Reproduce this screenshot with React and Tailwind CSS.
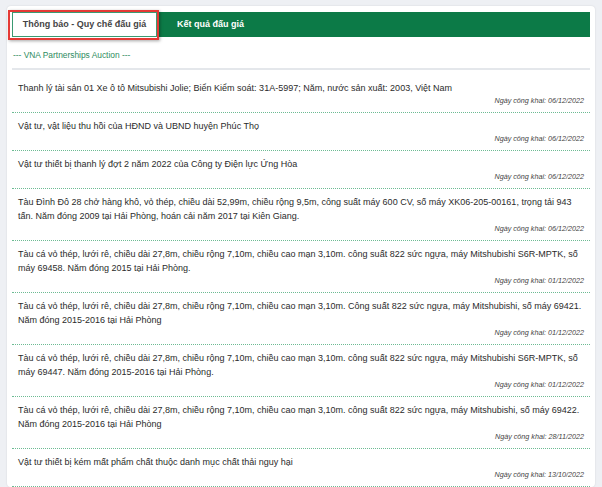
const items = [
  {
    title: 'Thanh lý tài sản 01 Xe ô tô Mitsubishi Jolie; Biển Kiểm soát: 31A-5997; Năm, nước sản xuất: 2003, Việt Nam',
    date: '06/12/2022'
  },
  { title: 'Vật tư, vật liệu thu hồi của HĐND và UBND huyện Phúc Thọ', date: '06/12/2022' },
  { title: 'Vật tư thiết bị thanh lý đợt 2 năm 2022 của Công ty Điện lực Ứng Hòa', date: '06/12/2022' },
  {
    title: 'Tàu Đình Đô 28 chở hàng khô, vỏ thép, chiều dài 52,99m, chiều rộng 9,5m, công suất máy 600 CV, số máy XK06-205-00161, trọng tải 943 tấn. Năm đóng 2009 tại Hải Phòng, hoán cải năm 2017 tại Kiên Giang.',
    date: '06/12/2022'
  },
  {
    title: 'Tàu cá vỏ thép, lưới rê, chiều dài 27,8m, chiều rộng 7,10m, chiều cao mạn 3,10m. công suất 822 sức ngựa, máy Mitshubishi S6R-MPTK, số máy 69458. Năm đóng 2015 tại Hải Phòng.',
    date: '01/12/2022'
  },
  {
    title: 'Tàu cá vỏ thép, lưới rê, chiều dài 27,8m, chiều rộng 7,10m, chiều cao mạn 3,10m. Công suất 822 sức ngựa, máy Mitshubishi, số máy 69421. Năm đóng 2015-2016 tại Hải Phòng',
    date: '01/12/2022'
  },
  {
    title: 'Tàu cá vỏ thép, lưới rê, chiều dài 27,8m, chiều rộng 7,10m, chiều cao mạn 3,10m. công suất 822 sức ngựa, máy Mitshubishi S6R-MPTK, số máy 69447. Năm đóng 2015-2016 tại Hải Phòng.',
    date: '01/12/2022'
  },
  {
    title: 'Tàu cá vỏ thép, lưới rê, chiều dài 27,8m, chiều rộng 7,10m, chiều cao mạn 3,10m. công suất 822 sức ngựa, máy Mitshubishi, số máy 69422. Năm đóng 2015-2016 tại Hải Phòng',
    date: '28/11/2022'
  },
  { title: 'Vật tư thiết bị kém mất phẩm chất thuộc danh mục chất thải nguy hại', date: '13/10/2022' }
]

export default function App() {
  return (
    <div className="h-[487px] overflow-hidden bg-[#eef0f4] pt-[6px] pl-[7px] pr-[7px] font-['Liberation_Sans',Arial,sans-serif] text-[#333]">
      <div className="rounded-[4px] bg-white px-[5px] pt-[6px] shadow-[0_0_2px_rgba(0,0,0,0.12)]">
        {/* tabs */}
        <div className="relative flex h-[25px] bg-[#0c7a47]">
          <div className="flex w-[145px] items-center justify-center whitespace-nowrap border border-[#3a9a72] bg-white text-[9px] font-bold text-[#444]">
            Thông báo - Quy chế đấu giá
          </div>
          <div className="flex items-center whitespace-nowrap pl-[20px] text-[9px] font-bold text-white">Kết quả đấu giá</div>
          <div className="pointer-events-none absolute left-[-4px] top-[-2px] h-[30px] w-[151px] border-2 border-[#e53935] shadow-[1px_1px_3px_rgba(0,0,0,0.35)]" />
        </div>

        <div className="pl-[1px] pt-[12px] pb-[7px] text-[8.4px] leading-[12px] text-[#2e8b5e]">
          --- VNA Partnerships Auction ---
        </div>

        <div className="border-t-2 border-[#e4e7eb] pt-[5px]">
          {items.map((item, i) => (
            <div key={i} className="border-b border-dotted border-[#6dbb93] px-[6px] pt-[6px] pb-[5px]">
              <div className="text-[9px] leading-[14px] text-[#2b2b2b]">{item.title}</div>
              <div className="text-right text-[7.2px] italic leading-[12px] text-[#444]">
                Ngày công khai: {item.date}
              </div>
            </div>
          ))}
        </div>
      </div>
    </div>
  )
}
